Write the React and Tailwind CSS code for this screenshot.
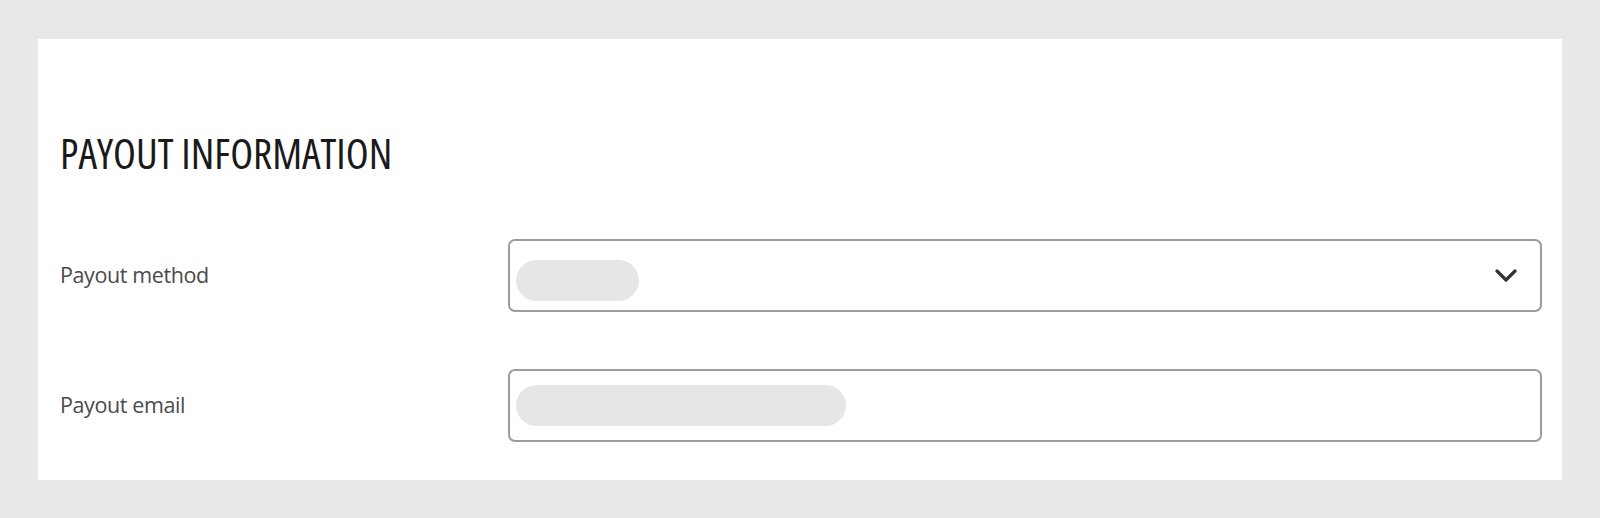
import React from 'react';

const FIELDS = [
    { label: 'Payout method', pill: 'w-[123px] mt-[10px]', select: true },
    { label: 'Payout email', pill: 'w-[330px]', select: false },
];

const Chevron = () => (
    <svg width="22" height="14" viewBox="0 0 22 14" fill="none">
        <polyline points="2,2 11,11 20,2" stroke="#333" strokeWidth="3.2" strokeLinecap="round" strokeLinejoin="round" />
    </svg>
);

const App = () => {
    return (
        <div className="w-[1600px] h-[518px] bg-[#e8e8e8] px-[38px] pt-[39px] font-['Open_Sans',sans-serif]">
            <div className="bg-white h-[441px] pl-[22px] pr-[20px] pt-[94px]">
                <h2 className="text-[42px] leading-[40px] text-[#1a1a1a] font-stretch-condensed">
                    PAYOUT INFORMATION
                </h2>

                <div className="flex flex-col gap-[57px] mt-[66px]">
                    {FIELDS.map((f) => (
                        <div key={f.label} className="flex items-center">
                            <div className="w-[448px] text-[21.5px] text-[#4b4b4b] tracking-[-0.4px]">
                                {f.label}
                            </div>
                            <div className="flex-1 h-[73px] border-2 border-[#9c9c9c] rounded-[7px] flex items-center pl-[6px] pr-[23px]">
                                <div className={`${f.pill} h-[41px] rounded-full bg-[#e6e6e6]`} />
                                {f.select && (
                                    <div className="ml-auto flex items-center">
                                        <Chevron />
                                    </div>
                                )}
                            </div>
                        </div>
                    ))}
                </div>
            </div>
        </div>
    );
};

export default App;
